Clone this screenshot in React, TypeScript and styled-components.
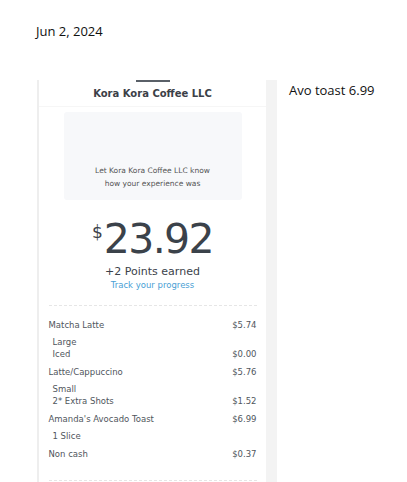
import React from 'react';
import styled, { createGlobalStyle } from 'styled-components';

interface LineItem {
  name: string;
  price?: string;
  sub?: boolean;
}

const items: LineItem[][] = [
  [{ name: 'Matcha Latte', price: '$5.74' }, { name: 'Large', sub: true }, { name: 'Iced', price: '$0.00', sub: true }],
  [{ name: 'Latte/Cappuccino', price: '$5.76' }, { name: 'Small', sub: true }, { name: '2* Extra Shots', price: '$1.52', sub: true }],
  [{ name: "Amanda's Avocado Toast", price: '$6.99' }, { name: '1 Slice', sub: true }],
  [{ name: 'Non cash', price: '$0.37' }],
];

const GlobalStyle = createGlobalStyle`
  html, body {
    margin: 0;
    padding: 0;
    background: #ffffff;
  }
  body {
    font-family: "Open Sans", "Liberation Sans", sans-serif;
    color: #111;
  }
`;

const Page = styled.div`
  width: 407px;
  height: 482px;
  overflow: hidden;
  padding: 22px 0 0 36px;
  box-sizing: border-box;
`;

const DateLine = styled.div`
  font-size: 13px;
  line-height: 18px;
  color: #111;
`;

const Body = styled.div`
  display: flex;
  align-items: flex-start;
  gap: 12px;
  margin-top: 40px;
`;

const Receipt = styled.div`
  display: flex;
  width: 240px;
  height: 402px;
  overflow: hidden;
  margin-left: 1px;
`;

const Card = styled.div`
  flex: 1;
  border-left: 2px solid #eeeeee;
  background: #fff;
  display: flex;
  flex-direction: column;
  align-items: center;
  font-family: "DejaVu Sans", "Liberation Sans", sans-serif;
  color: #50565d;
`;

const Gutter = styled.div`
  width: 11px;
  background: #f3f3f3;
`;

const Handle = styled.div`
  width: 34px;
  height: 2px;
  flex-shrink: 0;
  background: #5a6068;
`;

const Merchant = styled.div`
  margin-top: 6px;
  font-size: 10px;
  font-weight: bold;
  color: #3b4047;
  padding-bottom: 7px;
  width: 100%;
  text-align: center;
  border-bottom: 1px solid #f6f6f6;
`;

const Feedback = styled.div`
  margin-top: 5px;
  width: 178px;
  height: 88px;
  flex-shrink: 0;
  background: #f7f8fa;
  border-radius: 3px;
  display: flex;
  flex-direction: column;
  justify-content: flex-end;
  align-items: center;
  padding-bottom: 10px;
  box-sizing: border-box;
  font-size: 7.5px;
  line-height: 13px;
  color: #555;
  text-align: center;
`;

const Total = styled.div`
  margin-top: 19px;
  display: flex;
  align-items: flex-start;
  color: #3b424a;
`;

const Dollar = styled.span`
  font-size: 17px;
  line-height: 17px;
  margin-top: 5px;
  margin-right: 1px;
`;

const Amount = styled.span`
  font-size: 41px;
  line-height: 40px;
  letter-spacing: -1.6px;
`;

const Points = styled.div`
  margin-top: 6px;
  font-size: 11px;
  line-height: 14px;
  color: #3b424a;
`;

const TrackLink = styled.a`
  font-size: 8.5px;
  line-height: 13px;
  color: #4a9fd5;
  text-decoration: none;
`;

const Items = styled.div`
  margin-top: 13px;
  width: 208px;
  border-top: 1px dashed #e6e6e6;
  border-bottom: 1px dashed #e6e6e6;
  padding: 7px 0 20px;
`;

const Group = styled.div`
  display: flex;
  flex-direction: column;
`;

const Row = styled.div<{ $sub?: boolean }>`
  display: flex;
  justify-content: space-between;
  font-size: 8.5px;
  line-height: 12px;
  margin-top: ${(p) => (p.$sub ? '0' : '6px')};
  padding-left: ${(p) => (p.$sub ? '4px' : '0')};
  color: #50565d;
`;

const SubBlock = styled.div`
  margin-top: 5px;
  display: flex;
  flex-direction: column;
`;

const Note = styled.div`
  margin-top: 1px;
  font-size: 13px;
  line-height: 18px;
  color: #111;
`;

export default function App() {
  return (
    <>
      <GlobalStyle />
      <Page>
        <DateLine>Jun 2, 2024</DateLine>
        <Body>
          <Receipt>
            <Card>
              <Handle />
              <Merchant>Kora Kora Coffee LLC</Merchant>
              <Feedback>
                <div>Let Kora Kora Coffee LLC know</div>
                <div>how your experience was</div>
              </Feedback>
              <Total>
                <Dollar>$</Dollar>
                <Amount>23.92</Amount>
              </Total>
              <Points>+2 Points earned</Points>
              <TrackLink href="#">Track your progress</TrackLink>
              <Items>
                {items.map((group, gi) => {
                  const [main, ...subs] = group;
                  return (
                    <Group key={gi}>
                      <Row>
                        <span>{main.name}</span>
                        <span>{main.price}</span>
                      </Row>
                      {subs.length > 0 && (
                        <SubBlock>
                          {subs.map((s, si) => (
                            <Row key={si} $sub>
                              <span>{s.name}</span>
                              <span>{s.price}</span>
                            </Row>
                          ))}
                        </SubBlock>
                      )}
                    </Group>
                  );
                })}
              </Items>
            </Card>
            <Gutter />
          </Receipt>
          <Note>Avo toast 6.99</Note>
        </Body>
      </Page>
    </>
  );
}
